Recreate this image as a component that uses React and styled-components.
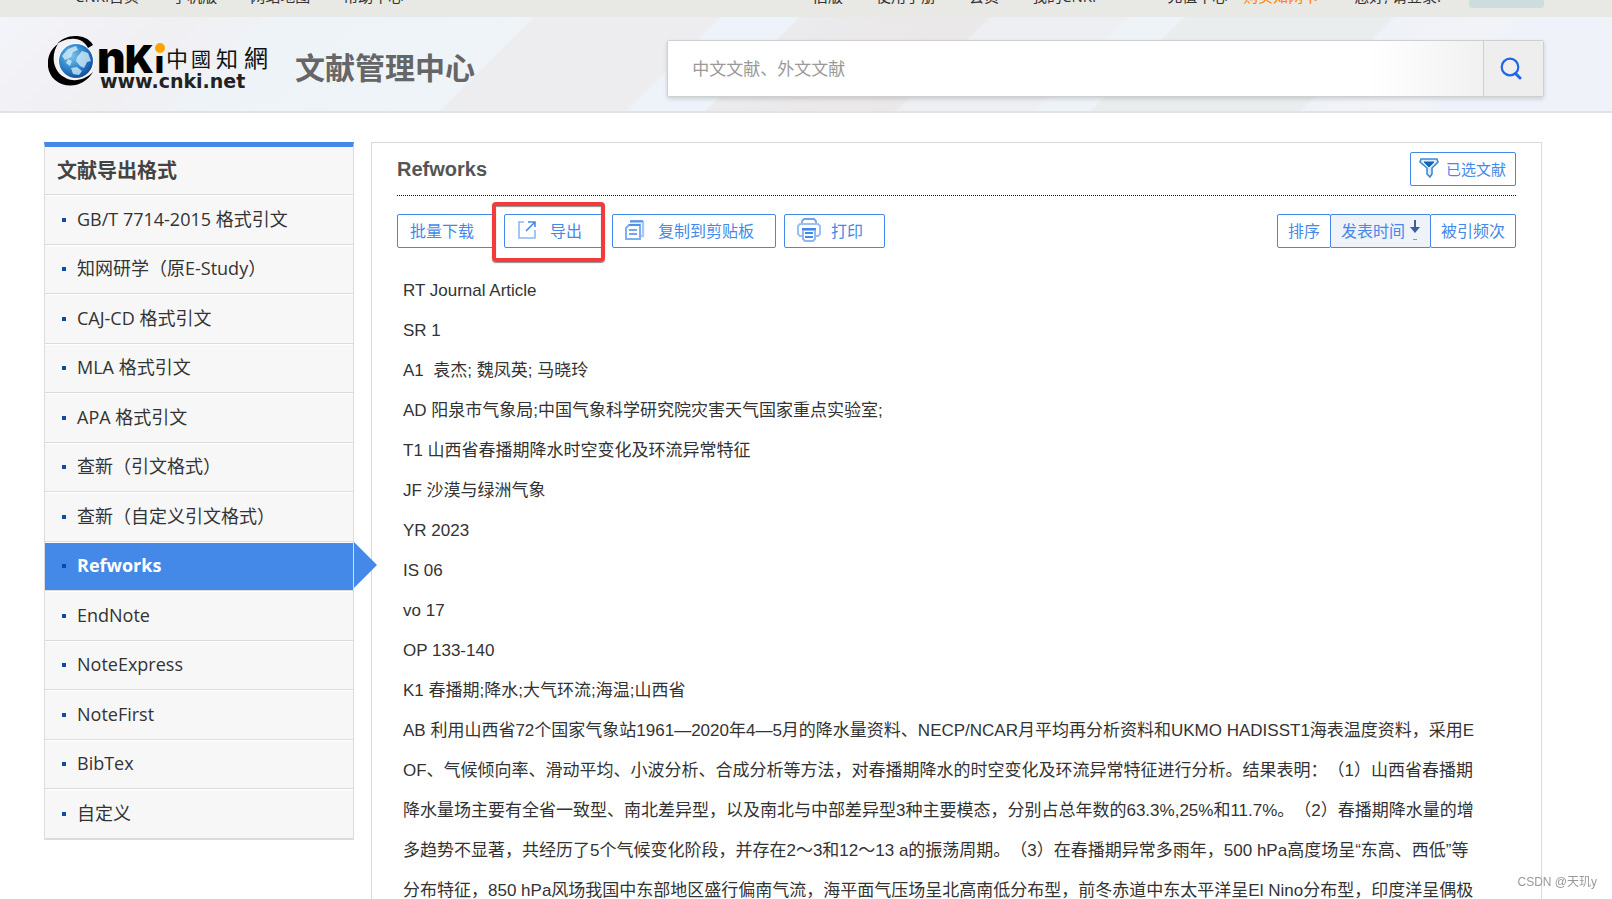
import React from "react";
import styled, { createGlobalStyle } from 'styled-components';

const GlobalStyle = createGlobalStyle`
     * {
          box-sizing: border-box;
     }
     body {
          margin: 0;
          height: 100vh;
          overflow: hidden;
          background: #fff;
          color: #333;
          font-family: "Open Sans", "Noto Sans CJK SC", sans-serif;
          text-spacing-trim: space-all;
     }
     button, input {
          font-family: inherit;
     }
     ul, h1, h2, p {
          margin: 0;
          padding: 0;
     }
     a {
          color: inherit;
          text-decoration: none;
     }
`;

const TopBar = styled.div`
     display: flex;
     align-items: flex-end;
     justify-content: space-between;
     height: 17px;
     padding: 0 68px 11px 75px;
     overflow: hidden;
     background: #e8e8e5;
     font-size: 15px;
     line-height: 20px;
     white-space: nowrap;
`;

const TopLinks = styled.nav`
     display: flex;
     gap: 33px;
`;

const UserLinks = styled(TopLinks)`
     align-items: flex-end;
     gap: 16px;
     margin-left: 71px;
`;

const TopRight = styled.div`
     display: flex;
     align-items: flex-end;
`;

const BuyLink = styled.a`
     margin-right: 20px;
     color: #ff7f00;
`;

const LoginButton = styled.button`
     width: 75px;
     height: 28px;
     margin: 0 0 -2px 12px;
     border: 0;
     border-radius: 3px;
     background: #cddddd;
`;

const Header = styled.header`
     display: flex;
     align-items: center;
     height: 96px;
     padding: 8px 68px 0 48px;
     border-bottom: 2px solid #e2e3e5;
     background: linear-gradient(135deg,
          #f3f4f9 0, #f0f0f3 120px, #f0f1f4 185px,
          #eef3f8 188px, #eef4f8 376px,
          #ededf0 379px, #ededf0 508px,
          #edf3f8 511px, #edf3f8 564px,
          #ebeaec 567px, #eae8e8 698px,
          #eeeff2 702px, #eeeff2 797px,
          #eef3f8 800px, #eef3f8 836px,
          #eaedee 839px, #eaedee 984px,
          #eff2f8 988px, #f2f3f7 1060px,
          #eff3f9 1080px);
`;

const HeaderTitle = styled.h1`
     flex: 1;
     margin-left: 23px;
     color: #666;
     font-size: 30px;
     font-weight: 700;
     line-height: 40px;
`;

const SearchForm = styled.form`
     display: flex;
     width: 58.6%;
     height: 57px;
     border: 1px solid #cfcfcf;
     border-radius: 2px;
     box-shadow: 0 2px 4px rgba(0,0,0,.15);
`;

const SearchInput = styled.input`
     flex: 1;
     min-width: 0;
     padding: 0 24px;
     border: 0;
     outline: 0;
     background: linear-gradient(to right, #fff 86%, #f1f1f1);
     font-size: 17px;
     &::placeholder {
          color: #999;
          opacity: 1;
     }
`;

const SearchButton = styled.button`
     display: flex;
     align-items: center;
     justify-content: center;
     width: 60px;
     padding: 0 6px 0 0;
     border: 0;
     border-left: 1px solid #cfcfcf;
     background: #eee;
     cursor: pointer;
`;

const Page = styled.div`
     display: flex;
     align-items: flex-start;
     gap: 17px;
     padding: 29px 70px 0 44px;
`;

const Sidebar = styled.aside`
     flex: 0 0 310px;
     border: 1px solid #dcdcdc;
     border-top: 5px solid #4489e8;
     border-bottom-width: 2px;
     background: #f7f7f7;
`;

const SidebarTitle = styled.h2`
     padding: 0 12px;
     font-size: 20px;
     line-height: 47px;
     color: #444;
`;

const FormatList = styled.ul`
     list-style: none;
`;

const FormatItem = styled.li`
     position: relative;
     height: 49px;
     border-top: 1px solid #dcdcdc;
     &:nth-child(odd) {
          height: 50px;
     }
`;

const FormatLink = styled.a`
     display: flex;
     align-items: center;
     gap: 11px;
     height: 100%;
     padding: 0 0 3px 17px;
     border-top: 1px solid #fff;
     font-size: 18px;
     line-height: 24px;
     color: ${props => props.$active ? '#fff' : '#333'};
     font-weight: ${props => props.$active ? 700 : 400};
     background: ${props => props.$active ? '#4489e8' : 'transparent'};
     background-clip: padding-box;
     &::before {
          content: "";
          width: 4px;
          height: 4px;
          margin-top: 2px;
          background: #0b4ba5;
     }
`;

const ActiveArrow = styled.span`
     position: absolute;
     top: 0;
     left: 100%;
     margin-left: 1px;
     border: 23px solid transparent;
     border-left-color: #4489e8;
     border-right: 0;
`;

const Panel = styled.main`
     flex: 1;
     min-width: 0;
     padding: 0 25px 40px;
     border: 1px solid #d9d9d9;
`;

const PanelHead = styled.div`
     display: flex;
     align-items: center;
     justify-content: space-between;
     height: 53px;
     border-bottom: 1px dotted #00105e;
`;

const PanelTitle = styled.h2`
     color: #555;
     font-family: "Liberation Sans", sans-serif;
     font-size: 20px;
`;

const Toolbar = styled.div`
     display: flex;
     gap: 8px;
     margin-top: 18px;
`;

const ToolButton = styled.button`
     display: flex;
     align-items: center;
     gap: ${props => props.$gap || 13}px;
     height: 34px;
     padding: 0 ${props => props.$end || 21}px 2px 12px;
     border: 1px solid #4489e8;
     border-radius: 2px;
     background: #fff;
     color: #4489e8;
     font-size: 16px;
     white-space: nowrap;
     cursor: pointer;
`;

const SelectedButton = styled(ToolButton)`
     padding: 0 9px 2px 8px;
     gap: 7px;
     font-size: 15px;
`;

const Highlighted = styled.div`
     position: relative;
`;

const RedFrame = styled.span`
     position: absolute;
     inset: -12px -1px -14px -12px;
     border: 4px solid #f33b3b;
     border-radius: 4px;
     box-shadow: 0 1px 1px rgba(0,0,0,.45), inset 0 1px 1px rgba(0,0,0,.45);
     pointer-events: none;
`;

const SortGroup = styled.div`
     display: flex;
     margin-left: auto;
`;

const SortButton = styled(ToolButton)`
     gap: 5px;
     padding: 0 10px 2px;
     background: ${props => props.$active ? '#eff2f6' : '#fff'};
     & + & {
          margin-left: -1px;
     }
`;

const Record = styled.div`
     margin-top: 23px;
     padding-left: 6px;
     font-family: "Liberation Sans", "Noto Sans CJK SC", sans-serif;
     font-size: 17px;
     line-height: 40px;
     white-space: pre;
`;

const Watermark = styled.span`
     position: fixed;
     right: 15px;
     bottom: 7px;
     color: #999;
     font-family: "Liberation Sans", "Noto Sans CJK SC", sans-serif;
     font-size: 12px;
     line-height: 20px;
`;

const leftLinks = ['CNKI首页', '手机版', '网站地图', '帮助中心'];
const rightLinks = ['旧版', '使用手册', '会员', '我的CNKI'];

const formats = [
     'GB/T 7714-2015 格式引文',
     '知网研学（原E-Study）',
     'CAJ-CD 格式引文',
     'MLA 格式引文',
     'APA 格式引文',
     '查新（引文格式）',
     '查新（自定义引文格式）',
     'Refworks',
     'EndNote',
     'NoteExpress',
     'NoteFirst',
     'BibTex',
     '自定义',
];

const record = [
     'RT Journal Article',
     'SR 1',
     'A1  袁杰; 魏凤英; 马晓玲',
     'AD 阳泉市气象局;中国气象科学研究院灾害天气国家重点实验室;',
     'T1 山西省春播期降水时空变化及环流异常特征',
     'JF 沙漠与绿洲气象',
     'YR 2023',
     'IS 06',
     'vo 17',
     'OP 133-140',
     'K1 春播期;降水;大气环流;海温;山西省',
     `AB 利用山西省72个国家气象站1961—2020年4—5月的降水量资料、NECP/NCAR月平均再分析资料和UKMO HADISST1海表温度资料，采用E
OF、气候倾向率、滑动平均、小波分析、合成分析等方法，对春播期降水的时空变化及环流异常特征进行分析。结果表明：（1）山西省春播期
降水量场主要有全省一致型、南北差异型，以及南北与中部差异型3种主要模态，分别占总年数的63.3%,25%和11.7%。（2）春播期降水量的增
多趋势不显著，共经历了5个气候变化阶段，并存在2～3和12～13 a的振荡周期。（3）在春播期异常多雨年，500 hPa高度场呈“东高、西低”等
分布特征，850 hPa风场我国中东部地区盛行偏南气流，海平面气压场呈北高南低分布型，前冬赤道中东太平洋呈El Nino分布型，印度洋呈偶极`,
];

function Logo(){
     return (
          <svg width="224" height="64" viewBox="0 0 224 64" role="img" aria-label="CNKI">
               <defs>
                    <radialGradient id="globe" cx="38%" cy="35%" r="70%">
                         <stop offset="0" stopColor="#7cc3ea"/>
                         <stop offset=".55" stopColor="#2f86cb"/>
                         <stop offset="1" stopColor="#124a9c"/>
                    </radialGradient>
               </defs>
               <circle cx="28" cy="25" r="18" fill="#fff"/>
               <circle cx="28" cy="25" r="17" fill="url(#globe)"/>
               <path d="M14 20l6-7 8-3 2 4-5 2-2 5-6 3zM29 21l5-6 6 2 3 8-4 1-3 6-4-2-4-5zM23 32l6-1 5 4-3 4-6-1zM20 23l4 2-2 5-4-3z" fill="#d9f0fb" opacity=".75"/>
               <path d="M45 9C41 2 34 0 27 0 20 0 13 3 9 8c4-3 9-5 14-5 8-1 14 3 17 9z" fill="#000"/>
               <path d="M10 8C-2 16-4 34 7 44c12 10 30 6 38-8-8 8-20 11-29 5C4 34 3 18 10 8z" fill="#000"/>
               <g fontFamily="Inter, sans-serif" fontWeight="900" fill="#000">
                    <text x="49" y="37" fontSize="44">n</text>
                    <text x="77" y="37" fontSize="38">K</text>
                    <text x="107" y="37" fontSize="30">ı</text>
               </g>
               <circle cx="112" cy="12" r="5" fill="#ffa400"/>
               <g fontFamily="'Noto Sans CJK SC', sans-serif" fill="#111">
                    <text x="118" y="31" fontSize="22">中</text>
                    <text x="143" y="31" fontSize="20">國</text>
                    <text x="168" y="31" fontSize="22">知</text>
                    <text x="196" y="31" fontSize="24">網</text>
               </g>
               <text x="52" y="52" fontFamily="'DejaVu Sans', sans-serif" fontSize="19" fontWeight="700" fill="#222">www.cnki.net</text>
          </svg>
     );
}

function SearchIcon(){
     return (
          <svg width="22" height="24" viewBox="0 0 22 24" fill="none" stroke="#1f68e5" strokeWidth="2.2" strokeLinecap="round">
               <circle cx="10" cy="11" r="8.3"/>
               <path d="M15.5 17.5l4.5 4.5" strokeWidth="3"/>
          </svg>
     );
}

function ExportIcon(){
     return (
          <svg width="20" height="20" viewBox="0 0 20 20" fill="none" strokeWidth="1.6">
               <path d="M7 2H2v16h16v-8" stroke="#8fb8f2"/>
               <path d="M11 2h7v5M18 2l-9 9" stroke="#4489e8"/>
          </svg>
     );
}

function CopyIcon(){
     return (
          <svg width="20" height="20" viewBox="0 0 20 20" fill="none" strokeWidth="1.6">
               <path d="M5 2h13v14h-2" stroke="#a9c8f5" strokeWidth="2.4"/>
               <path d="M4 5h11v14H1V8z" stroke="#7fafef" fill="#fff" strokeWidth="2"/>
               <path d="M5 1h13M4 5h11M4 10h8M4 14h8" stroke="#4489e8"/>
          </svg>
     );
}

function PrintIcon(){
     return (
          <svg width="24" height="24" viewBox="0 0 24 24" fill="none" stroke="#6fa4ee" strokeWidth="1.8">
               <path d="M5 6V3l2-2h10l2 2v3"/>
               <path d="M6 18H3l-2-2V8l2-2h18l2 2v8l-2 2h-3" stroke="#9cc0f4" strokeWidth="2"/>
               <path d="M6 12h12v9l-2 2H8l-2-2z" fill="#fff" stroke="#8fb8f2" strokeWidth="2"/>
               <path d="M5 11h14M8 15h8M8 19h8" stroke="#4489e8"/>
          </svg>
     );
}

function FilterIcon(){
     return (
          <svg width="20" height="20" viewBox="0 0 20 20">
               <path d="M2 1h16l1 3-6 6v6l-2 3-3-3v-6L1 4z" fill="#dcecfb" stroke="#3d8ad3" strokeWidth="1.6"/>
               <path d="M5 4h10l-5 5z" fill="#1265bd" stroke="#1265bd"/>
          </svg>
     );
}

function DownArrow(){
     return (
          <svg width="10" height="22" viewBox="0 0 10 22" fill="#385f9e">
               <path d="M4 1h2v7h4L5 14 0 8h4z"/>
               <path d="M3 20h4v1H3z" opacity=".6"/>
          </svg>
     );
}

export default function App(){
     return (
          <>
               <GlobalStyle/>
               <TopBar>
                    <TopLinks>
                         {leftLinks.map(text => <a href="#" key={text}>{text}</a>)}
                    </TopLinks>
                    <TopRight>
                         <TopLinks>
                              {rightLinks.map(text => <a href="#" key={text}>{text}</a>)}
                         </TopLinks>
                         <UserLinks>
                              <a href="#">充值中心</a>
                              <BuyLink href="#">购买知网卡</BuyLink>
                              <span>您好, 请登录!</span>
                              <LoginButton aria-label="登录"/>
                         </UserLinks>
                    </TopRight>
               </TopBar>
               <Header>
                    <Logo/>
                    <HeaderTitle>文献管理中心</HeaderTitle>
                    <SearchForm>
                         <SearchInput type="text" aria-label="检索" placeholder="中文文献、外文文献"/>
                         <SearchButton type="button" aria-label="检索"><SearchIcon/></SearchButton>
                    </SearchForm>
               </Header>
               <Page>
                    <Sidebar>
                         <SidebarTitle>文献导出格式</SidebarTitle>
                         <FormatList>
                              {formats.map(name => (
                                   <FormatItem key={name}>
                                        <FormatLink href="#" $active={name === 'Refworks'}>{name}</FormatLink>
                                        {name === 'Refworks' && <ActiveArrow/>}
                                   </FormatItem>
                              ))}
                         </FormatList>
                    </Sidebar>
                    <Panel>
                         <PanelHead>
                              <PanelTitle>Refworks</PanelTitle>
                              <SelectedButton><FilterIcon/>已选文献</SelectedButton>
                         </PanelHead>
                         <Toolbar>
                              <ToolButton>批量下载</ToolButton>
                              <Highlighted>
                                   <ToolButton><ExportIcon/>导出</ToolButton>
                                   <RedFrame/>
                              </Highlighted>
                              <ToolButton><CopyIcon/>复制到剪贴板</ToolButton>
                              <ToolButton $gap={10}><PrintIcon/>打印</ToolButton>
                              <SortGroup>
                                   <SortButton>排序</SortButton>
                                   <SortButton $active>发表时间<DownArrow/></SortButton>
                                   <SortButton>被引频次</SortButton>
                              </SortGroup>
                         </Toolbar>
                         <Record>
                              {record.map(line => <p key={line}>{line}</p>)}
                         </Record>
                    </Panel>
               </Page>
               <Watermark>CSDN @天玑y</Watermark>
          </>
     );
}
